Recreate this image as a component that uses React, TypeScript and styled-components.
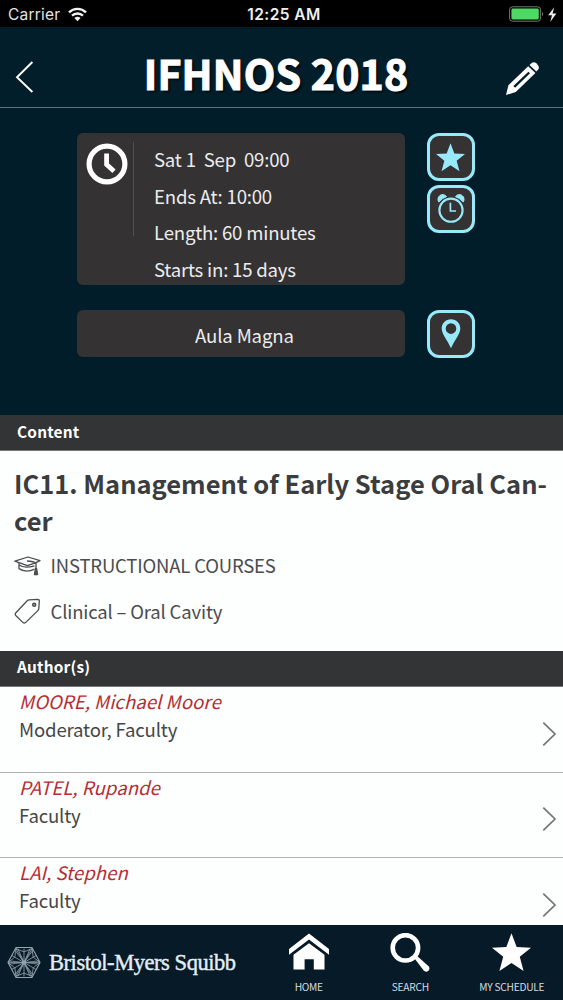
import React from "react";
import styled, { createGlobalStyle } from "styled-components";

const sans = `"Noto Sans CJK SC", "Open Sans", sans-serif`;
const system = `Inter, "Liberation Sans", sans-serif`;

const GlobalStyle = createGlobalStyle`
  * { box-sizing: border-box; }
  body { margin: 0; background: #fff; font-family: ${sans}; }
  svg { display: block; flex: none; }
`;

const Screen = styled.div`
  width: 563px;
  height: 1000px;
  overflow: hidden;
  display: flex;
  flex-direction: column;
  background: #fdfefe;
`;

const StatusBar = styled.div`
  flex: none;
  height: 27px;
  background: #000;
  color: #e4e4e4;
  display: grid;
  grid-template-columns: 1fr auto 1fr;
  align-items: center;
  padding: 2px 6px 0 8px;
  font: 500 15.5px/24px ${system};
  white-space: nowrap;
`;

const StatusSide = styled.div<{ $end?: boolean }>`
  display: flex;
  align-items: center;
  justify-content: ${(p) => (p.$end ? "flex-end" : "flex-start")};
  gap: 8px;
  font-weight: 400;
  letter-spacing: 0.2px;
`;

const Clock = styled.span`
  font-weight: 600;
  color: #efefef;
  letter-spacing: 0.45px;
  padding-left: 3px;
`;

const Header = styled.header`
  flex: none;
  height: 81px;
  background: #021e2a;
  border-bottom: 1px solid #567683;
  display: flex;
  align-items: center;
  justify-content: space-between;
  padding: 0 23px 0 15px;
`;

const Title = styled.h1`
  margin: 0;
  font-size: 41px;
  line-height: 60px;
  font-weight: 700;
  color: #fff;
  letter-spacing: 0.2px;
  white-space: nowrap;
  padding: 10px 0 0 12px;
  -webkit-text-stroke: 1.1px #fff;
  text-shadow: 2px 2px 2px rgba(0, 0, 0, 0.75);
`;

const HeaderIcon = styled.div<{ $top: number }>`
  padding-top: ${(p) => p.$top}px;
`;

const Hero = styled.section`
  flex: none;
  height: 307px;
  background: #011d29;
  padding: 25px 88px 0 77.4px;
  display: flex;
  flex-direction: column;
  gap: 25px;
`;

const HeroRow = styled.div`
  display: flex;
  gap: 21.6px;
`;

const Panel = styled.div<{ $height: number }>`
  width: 328px;
  height: ${(p) => p.$height}px;
  background: #343233;
  border-radius: 6px;
  color: #ececec;
  display: flex;
`;

const ClockCell = styled.div`
  width: 57px;
  height: 94px;
  margin-top: 9px;
  padding: 1px 0 0 9px;
  border-right: 1px solid #514f50;
`;

const TimeLines = styled.div`
  padding: 8px 0 0 19.6px;
  display: flex;
  flex-direction: column;
`;

const TimeLine = styled.div`
  font-size: 18.6px;
  line-height: 36.7px;
  white-space: pre;
  letter-spacing: -0.2px;
`;

const Venue = styled.div`
  flex: 1;
  text-align: center;
  font-size: 18.6px;
  line-height: 50px;
  padding-left: 6px;
  letter-spacing: -0.15px;
`;

const ButtonStack = styled.div`
  display: flex;
  flex-direction: column;
  gap: 4px;
`;

const IconButton = styled.button`
  width: 48px;
  height: 48px;
  padding: 0;
  border: 3px solid #98e9fa;
  border-radius: 12px;
  background: #343233;
  display: flex;
  align-items: center;
  justify-content: center;
`;

const SectionBar = styled.h2<{ $height: number; $line: number }>`
  flex: none;
  margin: 0;
  height: ${(p) => p.$height}px;
  background: #333435;
  border-bottom: 1px solid #777;
  color: #fff;
  font-size: 15.4px;
  line-height: ${(p) => p.$line}px;
  font-weight: 700;
  padding-left: 17px;
  letter-spacing: 0.2px;
`;

const Content = styled.section`
  flex: none;
  height: 200px;
  padding: 14px 14px 0 14px;
  color: #3b3c3e;
`;

const SessionTitle = styled.h3`
  margin: 0 0 4px;
  font-size: 25.5px;
  line-height: 36.8px;
  font-weight: 700;
  white-space: nowrap;
`;

const Meta = styled.div`
  height: 46px;
  display: flex;
  align-items: center;
  gap: 9.5px;
  font-size: 18.5px;
  line-height: 45px;
  color: #4b4c4e;
  white-space: nowrap;
  letter-spacing: -0.17px;
`;

const AuthorList = styled.ul`
  flex: 1;
  min-height: 0;
  overflow: hidden;
  margin: 0;
  padding: 0.5px 0 0;
  list-style: none;
`;

const AuthorRow = styled.li`
  height: 85.6px;
  border-bottom: 1px solid #b5b0b5;
  padding: 0.2px 6px 0 19px;
  display: flex;
  justify-content: space-between;
`;

const AuthorName = styled.div`
  font-size: 18.6px;
  line-height: 28px;
  font-style: italic;
  color: #b52d33;
  letter-spacing: 0.04px;
`;

const AuthorRole = styled.div`
  font-size: 18.6px;
  line-height: 27.5px;
  color: #464648;
  letter-spacing: -0.17px;
`;

const RowChevron = styled.div`
  padding-top: 33.5px;
`;

const Footer = styled.footer`
  flex: none;
  height: 75px;
  background: #061a27;
  display: flex;
`;

const Sponsor = styled.div`
  width: 258px;
  padding-left: 6.5px;
  display: flex;
  align-items: center;
  gap: 8.5px;
`;

const SponsorName = styled.span`
  font: 400 22.5px/30px "Liberation Serif", serif;
  color: #e3eef6;
  letter-spacing: -0.45px;
  white-space: nowrap;
  -webkit-text-stroke: 0.4px #e3eef6;
`;

const Tab = styled.div`
  width: 101.5px;
  padding-top: 7px;
  display: flex;
  flex-direction: column;
  align-items: center;
  color: #fff;
`;

const TabGlyph = styled.div`
  height: 42px;
  padding-top: 1px;
`;

const TabLabel = styled.span`
  margin-top: 4.5px;
  font-size: 10.2px;
  line-height: 16px;
  letter-spacing: -0.25px;
  color: #d5dde2;
  white-space: nowrap;
`;

const STAR = "M20 0 L25.3 14.1 L40 14.8 L28.5 24.1 L32.4 38.6 L20 30.5 L7.6 38.6 L11.5 24.1 L0 14.8 L14.7 14.1 Z";

const Star = ({ size, color }: { size: number; color: string }) => (
  <svg width={size} height={size} viewBox="0 0 40 39.5" fill={color}>
    <path d={STAR} />
  </svg>
);

const Wifi = () => (
  <svg width="19" height="15" viewBox="0 0 19 15" fill="none" stroke="#f2f2f2">
    <path d="M1 5.3 A12.2 12.2 0 0 1 18 5.3" strokeWidth="2.4" />
    <path d="M4 8.7 A8 8 0 0 1 15 8.7" strokeWidth="2.3" />
    <path d="M9.5 14.2 L6.4 11.1 A4.6 4.6 0 0 1 12.6 11.1 Z" fill="#f2f2f2" stroke="none" />
  </svg>
);

const Battery = () => (
  <svg width="48" height="18" viewBox="0 0 48 18">
    <rect x="0.6" y="0.8" width="31" height="14.4" rx="3" fill="none" stroke="#747b75" strokeWidth="1" />
    <rect x="2.4" y="2.6" width="27.4" height="10.8" rx="1.4" fill="#4cd964" />
    <path d="M33 5.8 a3 3 0 0 1 0 4.4 Z" fill="#747b75" />
    <path d="M45.2 1.2 L39.2 9.3 L43 9.3 L41.2 16 L47.4 7.4 L43.6 7.4 Z" fill="#eee" />
  </svg>
);

const Pencil = () => (
  <svg width="35" height="35" viewBox="0 0 35 35">
    <path
      fillRule="evenodd"
      fill="#fff"
      d="M1 34 L3.4 24.2 L23.2 5.2 L30.4 12 L10.8 31 Z M8.4 25.1 L10.1 26.7 L25 12.3 L23.4 10.8 Z"
    />
    <path fill="#fff" d="M24.5 4 L26.6 2 Q29 0.2 31.6 2.6 L32.6 3.7 Q34.8 6.3 33.2 8.6 L31.3 10.6 Z" />
  </svg>
);

const ClockIcon = () => (
  <svg width="42" height="42" viewBox="0 0 42 42" fill="none" stroke="#fff">
    <circle cx="21" cy="21" r="17.9" strokeWidth="5.2" />
    <path d="M20.6 10.5 V21.4 L28 28.3" strokeWidth="4.8" />
  </svg>
);

const AlarmIcon = () => (
  <svg width="28" height="30" viewBox="0 0 28 30" fill="none" stroke="#98e9fa">
    <circle cx="14" cy="16.2" r="11.6" strokeWidth="2.1" />
    <path d="M13.4 8.8 V17 H19" strokeWidth="1.7" />
    <path d="M1.8 8 A4.6 4.6 0 0 1 9.6 2.6 Q5 4.2 1.8 8 Z" fill="#98e9fa" />
    <path d="M26.2 8 A4.6 4.6 0 0 0 18.4 2.6 Q23 4.2 26.2 8 Z" fill="#98e9fa" />
  </svg>
);

const PinIcon = () => (
  <svg width="20" height="30" viewBox="0 0 20 30">
    <path
      fill="#98e9fa"
      fillRule="evenodd"
      d="M10 0.3 C4.7 0.3 0.7 4.3 0.7 9.4 C0.7 15 6.2 20.5 10 29.3 C13.8 20.5 19.3 15 19.3 9.4 C19.3 4.3 15.3 0.3 10 0.3 Z M10 4.3 a5.3 5.3 0 1 1 0 10.6 a5.3 5.3 0 1 1 0 -10.6 Z"
    />
  </svg>
);

const CapIcon = () => (
  <svg width="27" height="20" viewBox="0 0 27 20" fill="none" stroke="#4b4c4e" strokeWidth="1.3" strokeLinejoin="round">
    <path d="M0.8 5.2 L14 1 L26 4.6 L22 6.6 L13.5 9.6 Z" />
    <path d="M5 7 V12.6 Q12 17.4 20.5 13.2 M5.2 9 Q10 12.6 20.5 9.8" />
    <path d="M13 5 Q20 5.5 22 7 V13" />
    <path d="M21.5 12.5 L20.4 18.6 H23.6 L22.6 12.5 Z" fill="#4b4c4e" />
  </svg>
);

const TagIcon = () => (
  <svg width="27" height="27" viewBox="0 0 27 27" fill="none" stroke="#4b4c4e" strokeWidth="1.3" strokeLinejoin="round">
    <path d="M15.2 1.8 L23.6 1.3 Q25.4 1.3 25.3 3.2 L24.8 10.6 Q24.6 11.9 23.6 12.9 L11.5 24.6 Q10.2 25.6 9 24.6 L1.8 17.5 Q0.6 16.2 1.9 14.8 L13.2 2.8 Q14.1 1.9 15.2 1.8 Z" />
    <circle cx="20.2" cy="6.7" r="1.6" fill="#8d8e90" />
  </svg>
);

const Chevron = () => (
  <svg width="15" height="26" viewBox="0 0 15 26" fill="none" stroke="#747476" strokeWidth="1.7">
    <path d="M1.3 1.6 L13 13 L1.3 24.4" />
  </svg>
);

const angles = [0, 60, 120, 180, 240, 300];
const SponsorMark = () => (
  <svg width="34" height="34" viewBox="-17 -16.5 34 34" fill="none" stroke="#94a4ad" strokeWidth="0.75">
    <path d="M16 0 L8 -15 H-8 L-16 0 L-8 15 H8 Z" strokeWidth="1.1" />
    {angles.map((a) => (
      <g key={a} transform={`rotate(${a})`}>
        <path d="M0 0 L16 0 M0 0 L15 -1.6 M0 0 L15 1.6" />
        <path d="M0 0 L9.2 5.3 L16 0 M9.2 5.3 L8 14 M9.2 5.3 L12 7" />
      </g>
    ))}
    <circle r="1.6" fill="#94a4ad" />
  </svg>
);

const HomeIcon = () => (
  <svg width="42" height="38" viewBox="0 0 42 38" fill="#fff">
    <path d="M21 0.5 L41 16 V21.8 L21 6.6 L1 21.8 V16 Z" />
    <path d="M21 10.2 L36.5 21.8 V36.6 H25.8 V26.2 H16.6 V36.6 H5.5 V21.8 Z" />
  </svg>
);

const SearchIcon = () => (
  <svg width="42" height="42" viewBox="0 0 42 42" fill="none" stroke="#fff">
    <circle cx="16.4" cy="14.8" r="12.7" strokeWidth="4.6" />
    <path d="M24.8 24.5 L27.3 22.2 L39.6 33.3 Q41.4 35.8 39.4 37.7 Q37 39.6 34.7 37.6 Z" fill="#fff" stroke="none" />
  </svg>
);

const authors = [
  { name: "MOORE, Michael Moore", role: "Moderator, Faculty" },
  { name: "PATEL, Rupande", role: "Faculty" },
  { name: "LAI, Stephen", role: "Faculty" },
];

export default function App() {
  return (
    <Screen>
      <GlobalStyle />
      <StatusBar>
        <StatusSide>
          <span>Carrier</span>
          <Wifi />
        </StatusSide>
        <Clock>12:25 AM</Clock>
        <StatusSide $end>
          <Battery />
        </StatusSide>
      </StatusBar>
      <Header>
        <HeaderIcon $top={19}>
          <svg width="20" height="34" viewBox="0 0 20 34" fill="none" stroke="#fff" strokeWidth="1.9">
            <path d="M17.4 2 L2 17.3 L17.4 32" />
          </svg>
        </HeaderIcon>
        <Title>IFHNOS 2018</Title>
        <HeaderIcon $top={22}>
          <Pencil />
        </HeaderIcon>
      </Header>
      <Hero>
        <HeroRow>
          <Panel $height={152}>
            <ClockCell>
              <ClockIcon />
            </ClockCell>
            <TimeLines>
              <TimeLine>Sat 1{"  "}Sep{"  "}09:00</TimeLine>
              <TimeLine>Ends At: 10:00</TimeLine>
              <TimeLine>Length: 60 minutes</TimeLine>
              <TimeLine>Starts in: 15 days</TimeLine>
            </TimeLines>
          </Panel>
          <ButtonStack>
            <IconButton aria-label="Favourite">
              <Star size={29} color="#98e9fa" />
            </IconButton>
            <IconButton aria-label="Reminder">
              <AlarmIcon />
            </IconButton>
          </ButtonStack>
        </HeroRow>
        <HeroRow>
          <Panel $height={47}>
            <Venue>Aula Magna</Venue>
          </Panel>
          <IconButton aria-label="Location">
            <PinIcon />
          </IconButton>
        </HeroRow>
      </Hero>
      <SectionBar $height={36} $line={33}>
        Content
      </SectionBar>
      <Content>
        <SessionTitle>
          IC11. Management of Early Stage Oral Can-
          <br />
          cer
        </SessionTitle>
        <Meta>
          <CapIcon />
          <span>INSTRUCTIONAL COURSES</span>
        </Meta>
        <Meta>
          <TagIcon />
          <span>Clinical – Oral Cavity</span>
        </Meta>
      </Content>
      <SectionBar $height={35.5} $line={31}>
        Author(s)
      </SectionBar>
      <AuthorList>
        {authors.map((a) => (
          <AuthorRow key={a.name}>
            <div>
              <AuthorName>{a.name}</AuthorName>
              <AuthorRole>{a.role}</AuthorRole>
            </div>
            <RowChevron>
              <Chevron />
            </RowChevron>
          </AuthorRow>
        ))}
      </AuthorList>
      <Footer>
        <Sponsor>
          <SponsorMark />
          <SponsorName>Bristol-Myers Squibb</SponsorName>
        </Sponsor>
        <Tab>
          <TabGlyph>
            <HomeIcon />
          </TabGlyph>
          <TabLabel>HOME</TabLabel>
        </Tab>
        <Tab>
          <TabGlyph>
            <SearchIcon />
          </TabGlyph>
          <TabLabel>SEARCH</TabLabel>
        </Tab>
        <Tab>
          <TabGlyph>
            <Star size={39} color="#fff" />
          </TabGlyph>
          <TabLabel>MY SCHEDULE</TabLabel>
        </Tab>
      </Footer>
    </Screen>
  );
}
